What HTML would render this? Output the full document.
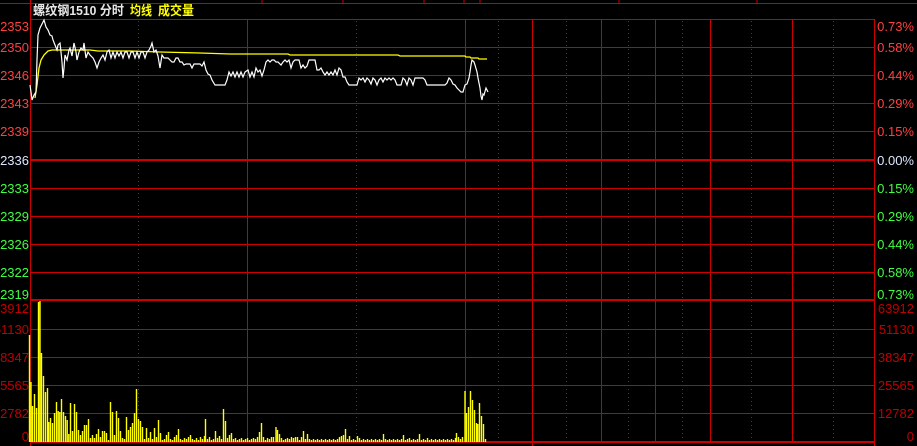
<!DOCTYPE html>
<html><head><meta charset="utf-8"><style>
html,body{margin:0;padding:0;background:#000;width:917px;height:446px;overflow:hidden}
svg{display:block}
text{font-family:"Liberation Sans","Noto Sans CJK SC",sans-serif;font-size:13px}
</style></head><body>
<svg width="917" height="446" viewBox="0 0 917 446" xmlns="http://www.w3.org/2000/svg">
<rect width="917" height="446" fill="#000"/>
<line x1="0" y1="3.5" x2="917" y2="3.5" stroke="#c00" stroke-width="1"/>
<g stroke="#c00" stroke-width="1">
<line x1="262" y1="0" x2="262" y2="3"/><line x1="343" y1="0" x2="343" y2="3"/><line x1="424" y1="0" x2="424" y2="3"/><line x1="464" y1="0" x2="464" y2="3"/><line x1="480" y1="0" x2="480" y2="4"/><line x1="619" y1="0" x2="619" y2="3"/><line x1="757" y1="0" x2="757" y2="3"/>
</g>
<g stroke="#c00" stroke-width="1">
<line x1="30" y1="19.5" x2="874" y2="19.5"/>
<line x1="30" y1="47.5" x2="874" y2="47.5"/>
<line x1="30" y1="75.5" x2="874" y2="75.5"/>
<line x1="30" y1="103.5" x2="874" y2="103.5"/>
<line x1="30" y1="131.5" x2="874" y2="131.5"/>
<line x1="30" y1="188.5" x2="874" y2="188.5"/>
<line x1="30" y1="216.5" x2="874" y2="216.5"/>
<line x1="30" y1="244.5" x2="874" y2="244.5"/>
<line x1="30" y1="272.5" x2="874" y2="272.5"/>
<line x1="30" y1="329.5" x2="874" y2="329.5"/>
<line x1="30" y1="357.5" x2="874" y2="357.5"/>
<line x1="30" y1="385.5" x2="874" y2="385.5"/>
<line x1="30" y1="413.5" x2="874" y2="413.5"/>
</g>
<g stroke="#c00" stroke-width="2">
<line x1="30" y1="160" x2="874" y2="160"/>
<line x1="30" y1="300" x2="874" y2="300"/>
<line x1="30" y1="442" x2="874" y2="442"/>
</g>
<g stroke="#c00" stroke-width="1">
<line x1="30.5" y1="0" x2="30.5" y2="446"/>
<line x1="247.5" y1="19" x2="247.5" y2="442"/>
<line x1="465.5" y1="19" x2="465.5" y2="442"/>
<line x1="532.5" y1="19" x2="532.5" y2="446"/>
<line x1="601.5" y1="19" x2="601.5" y2="442"/>
<line x1="655.5" y1="19" x2="655.5" y2="442"/>
<line x1="710.5" y1="19" x2="710.5" y2="442"/>
<line x1="792.5" y1="19" x2="792.5" y2="442"/>
<line x1="874.5" y1="19" x2="874.5" y2="446"/>
</g>
<g stroke="#c00" stroke-width="1" stroke-dasharray="1 3">
<line x1="138.5" y1="21" x2="138.5" y2="442"/>
<line x1="356.5" y1="21" x2="356.5" y2="442"/>
<line x1="498.5" y1="21" x2="498.5" y2="442"/>
<line x1="566.5" y1="21" x2="566.5" y2="442"/>
<line x1="628.5" y1="21" x2="628.5" y2="442"/>
<line x1="682.5" y1="21" x2="682.5" y2="442"/>
<line x1="751.5" y1="21" x2="751.5" y2="442"/>
<line x1="833.5" y1="21" x2="833.5" y2="442"/>
</g>
<text x="33" y="15" fill="#e8e8e8" font-size="12" font-weight="bold" textLength="91" lengthAdjust="spacingAndGlyphs">螺纹钢1510 分时</text>
<text x="130" y="15" fill="#ffff00" font-size="12" font-weight="bold" textLength="22" lengthAdjust="spacingAndGlyphs">均线</text>
<text x="158" y="15" fill="#ffff00" font-size="12" font-weight="bold" textLength="36" lengthAdjust="spacingAndGlyphs">成交量</text>
<g text-anchor="end">
<text x="29" y="31" fill="#ff4040">2353</text>
<text x="29" y="52" fill="#ff4040">2350</text>
<text x="29" y="80" fill="#ff4040">2346</text>
<text x="29" y="108" fill="#ff4040">2343</text>
<text x="29" y="136" fill="#ff4040">2339</text>
<text x="29" y="165" fill="#dde6ff">2336</text>
<text x="29" y="193" fill="#40ff40">2333</text>
<text x="29" y="221" fill="#40ff40">2329</text>
<text x="29" y="249" fill="#40ff40">2326</text>
<text x="29" y="277" fill="#40ff40">2322</text>
<text x="29" y="299" fill="#40ff40">2319</text>
<text x="29" y="313" fill="#c00000">63912</text>
<text x="29" y="334" fill="#c00000">51130</text>
<text x="29" y="362" fill="#c00000">38347</text>
<text x="29" y="390" fill="#c00000">25565</text>
<text x="29" y="418" fill="#c00000">12782</text>
<text x="29" y="441" fill="#c00000">0</text>
</g>
<g text-anchor="end">
<text x="914" y="31" fill="#ff4040">0.73%</text>
<text x="914" y="52" fill="#ff4040">0.58%</text>
<text x="914" y="80" fill="#ff4040">0.44%</text>
<text x="914" y="108" fill="#ff4040">0.29%</text>
<text x="914" y="136" fill="#ff4040">0.15%</text>
<text x="914" y="165" fill="#dde6ff">0.00%</text>
<text x="914" y="193" fill="#40ff40">0.15%</text>
<text x="914" y="221" fill="#40ff40">0.29%</text>
<text x="914" y="249" fill="#40ff40">0.44%</text>
<text x="914" y="277" fill="#40ff40">0.58%</text>
<text x="914" y="299" fill="#40ff40">0.73%</text>
<text x="914" y="313" fill="#c00000">63912</text>
<text x="914" y="334" fill="#c00000">51130</text>
<text x="914" y="362" fill="#c00000">38347</text>
<text x="914" y="390" fill="#c00000">25565</text>
<text x="914" y="418" fill="#c00000">12782</text>
<text x="914" y="441" fill="#c00000">0</text>
</g>
<polyline fill="none" stroke="#ffff00" stroke-width="1.3" points="35,98 37,85 39,68 41,60 44,55 48,51 52,50 64,50 90,50 98,51 130,51 160,52 200,53 230,54 288,54 290,55 398,55 400,56 465,56 466,57 470,57 471,58 478,58 479,59 487,59"/>
<polyline fill="none" stroke="#fff" stroke-width="1.2" points="30,85 31,92 32,100 34,95 36,92 37,60 38,35 40,28 42,24 44,20 46,27 48,30 50,35 52,36 53,40 55,45 57,50 58,45 60,43 61,52 62,62 63,78 64,68 65,55 67,60 69,50 70,48 72,56 74,43 76,52 77,60 79,52 81,48 83,50 84,43 86,58 88,52 90,55 93,58 95,62 97,68 99,62 101,58 103,55 105,60 107,52 109,50 111,58 113,52 115,58 117,52 119,56 121,52 123,58 125,52 127,52 129,58 131,52 133,52 135,58 137,52 139,58 141,52 143,52 145,58 147,52 149,50 151,46 152,43 154,52 156,50 158,56 160,68 162,55 164,58 166,58 168,58 170,60 172,62 174,62 176,58 178,58 180,62 182,62 184,65 186,64 188,64 190,64 192,68 194,64 196,64 198,64 200,64 202,66 204,62 206,70 208,74 210,75 212,80 215,85 218,85 222,85 225,85 227,80 229,72 231,76 233,72 235,77 237,72 239,77 241,72 243,77 245,72 248,70 250,77 252,72 254,77 256,68 258,72 260,70 262,76 264,70 266,62 268,60 270,62 272,60 274,60 276,62 278,62 281,65 283,62 285,60 287,62 289,60 291,68 293,62 295,60 297,60 299,60 301,68 303,65 305,68 307,66 309,60 311,60 313,60 315,60 317,70 319,70 321,68 323,72 325,75 327,72 329,75 331,72 333,75 335,70 337,75 339,68 341,70 343,77 345,77 347,82 349,85 351,85 353,85 355,85 357,85 359,78 361,80 363,78 365,82 367,78 369,80 371,84 373,78 375,80 377,85 379,80 381,78 383,82 385,78 387,80 389,78 391,80 393,78 395,80 397,85 399,85 401,85 403,78 405,80 407,85 409,78 411,80 413,85 415,78 417,78 419,78 421,78 423,78 425,80 427,85 429,85 431,85 433,85 435,85 437,85 439,85 441,85 443,85 445,85 447,83 449,78 451,80 453,84 455,85 457,88 459,90 461,92 463,92 465,85 467,84 469,78 470,72 471,65 472,60 474,62 475,65 477,72 478,78 480,88 481,96 482,100 483,94 484,95 486,88 488,92"/>
<path fill="none" stroke="#ffff00" stroke-width="1.4" d="M29.5 442V335M31 442V382M32.5 442V406M34.5 442V394M36.5 442V408M38.5 442V302M40 442V301M41.5 442V353M43.5 442V376M45.5 442V392M47.5 442V388M48.8 442V422M50.5 442V418M52.5 442V423M54.5 442V413M56.5 442V402M58.2 442V411M59.8 442V412M61.5 442V399M63.5 442V412M65.5 442V416M67.2 442V420M68.8 442V434M70.5 442V403M72.5 442V431M74.5 442V404M76.5 442V412M78.5 442V430M80.5 442V435M82.5 442V431M84.5 442V425M86.5 442V425M88.5 442V419M90.5 442V438M92.5 442V435M94.5 442V438M96.5 442V434M98.5 442V429M100.5 442V437M102.5 442V431M104.5 442V431M106.5 442V433M108.5 442V440M110.5 442V402M112.5 442V412M114.5 442V435M116.5 442V411M118.5 442V418M120.5 442V431M122.5 442V438M124.5 442V439M126.5 442V417M128.5 442V430M130.5 442V427M132.5 442V423M134.5 442V413M136.5 442V389M138.5 442V419M140.5 442V421M142.5 442V427M144.5 442V439M146.5 442V428M148.5 442V438M150.5 442V432M152.5 442V439M154.5 442V428M156.5 442V437M158.5 442V420M160.5 442V433M162.5 442V440M164.5 442V439M166.5 442V435M168.5 442V432M170.5 442V439M172.5 442V440M174.5 442V437M176.5 442V435M178.5 442V429M180.5 442V439M182.5 442V440M184.5 442V438M186.5 442V439M188.5 442V437M190.5 442V435M192.5 442V439M194.5 442V440M196.5 442V438M198.5 442V440M200.5 442V437M202.5 442V439M204.5 442V436M205.5 442V419M207.5 442V439M209.5 442V437M211.5 442V440M213.5 442V439M215.5 442V431M217.5 442V438M219.5 442V436M221.5 442V439M223.5 442V409M225.5 442V421M227.5 442V438M229.5 442V435M231.5 442V433M233.5 442V439M235.5 442V438M237.5 442V440M239.5 442V439M241.5 442V438M243.5 442V440M245.5 442V439M247.5 442V438M249.5 442V440M251.5 442V439M253.5 442V438M255.5 442V439M257.5 442V437M259.5 442V432M261.5 442V423M263.5 442V437M265.5 442V440M267.5 442V438M269.5 442V439M271.5 442V437M273.5 442V437M276 442V427M277.5 442V430M279.5 442V434M281.5 442V438M283.5 442V440M285.5 442V439M287.5 442V438M289.5 442V439M291.5 442V437M293.5 442V438M295.5 442V437M297.5 442V437M299.5 442V440M301.5 442V437M303.5 442V431M305.5 442V439M307.5 442V434M309.5 442V439M311.5 442V440M313.5 442V439M315.5 442V440M317.5 442V439M319.5 442V440M321.5 442V439M323.5 442V440M325.5 442V439M327.5 442V440M329.5 442V439M331.5 442V440M333.5 442V439M335.5 442V440M337.5 442V439M339.5 442V437M341.5 442V436M343.5 442V435M345.5 442V429M347.5 442V439M349.5 442V436M351.5 442V440M353.5 442V439M355.5 442V440M357.5 442V436M359.5 442V438M361.5 442V440M363.5 442V439M365.5 442V440M367.5 442V439M369.5 442V440M371.5 442V439M373.5 442V440M375.5 442V439M377.5 442V440M379.5 442V439M381.5 442V440M383.5 442V434M385.5 442V439M387.5 442V440M389.5 442V439M391.5 442V440M393.5 442V439M395.5 442V440M397.5 442V439M399.5 442V440M401.5 442V439M403.5 442V435M405.5 442V440M407.5 442V439M409.5 442V438M411.5 442V440M413.5 442V439M415.5 442V440M417.5 442V439M419.5 442V434M421.5 442V440M423.5 442V439M425.5 442V440M427.5 442V438M429.5 442V440M431.5 442V439M433.5 442V440M435.5 442V439M437.5 442V440M439.5 442V439M441.5 442V440M443.5 442V439M445.5 442V440M447.5 442V439M449.5 442V440M451.5 442V439M453.5 442V440M455.5 442V438M456.5 442V433M458.5 442V437M460.5 442V439M462.5 442V437M465 442V391M466.5 442V413M468.5 442V407M470.5 442V391M472.5 442V400M474.5 442V410M476.5 442V423M477.8 442V424M479.5 442V403M481.5 442V416M483.5 442V424M485.5 442V439"/>
</svg>
</body></html>
